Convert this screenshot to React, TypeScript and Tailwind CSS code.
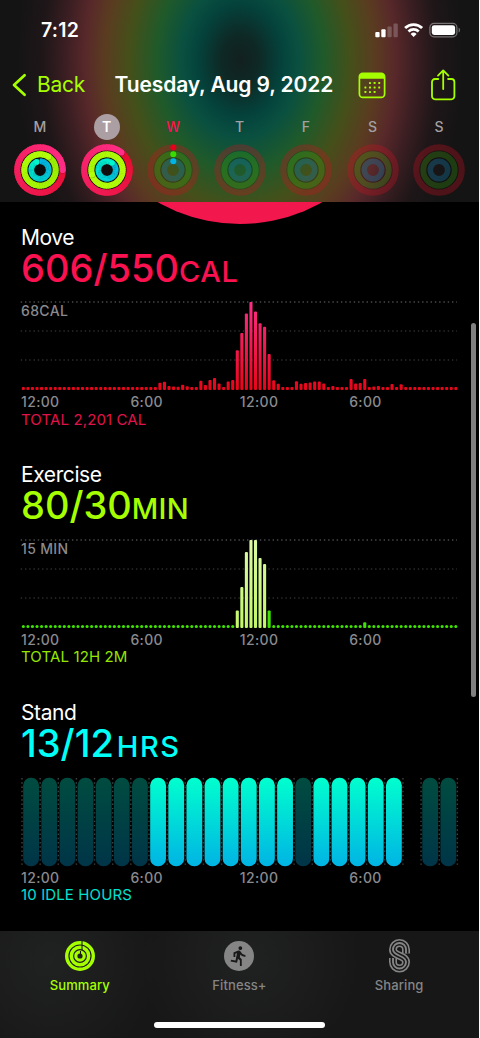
import React from 'react';
import { MdDirectionsRun } from 'react-icons/md';

type Rgb = [number, number, number];

interface RingSpec {
  radius: number;
  width: number;
  from: Rgb;
  to: Rgb;
  idle: string;
}

const RINGS: RingSpec[] = [
  { radius: 22.7, width: 6.2, from: [226, 8, 34], to: [255, 46, 136], idle: 'rgba(200,20,35,0.32)' },
  { radius: 15.7, width: 6, from: [150, 236, 0], to: [180, 255, 10], idle: 'rgba(60,170,10,0.27)' },
  { radius: 8.7, width: 5.6, from: [0, 178, 228], to: [0, 246, 204], idle: 'rgba(20,120,160,0.36)' },
];

interface Day {
  label: string;
  state: 'done' | 'today' | 'future';
  selected?: boolean;
  progress?: number[];
}

const DAYS: Day[] = [
  { label: 'M', state: 'done', progress: [1.25, 1.09, 0.94] },
  { label: 'T', state: 'done', selected: true, progress: [1.11, 2.7, 1.1] },
  { label: 'W', state: 'today' },
  { label: 'T', state: 'future' },
  { label: 'F', state: 'future' },
  { label: 'S', state: 'future' },
  { label: 'S', state: 'future' },
];

// 15 minute buckets, value is the bar height in px
const sparse = (values: Record<number, number>) =>
  Array.from({ length: 96 }, (_, i) => values[i] ?? 3);

const MOVE = sparse({
  30: 7.3, 31: 8.3, 32: 4, 33: 3.5, 34: 3.3, 35: 5.3, 36: 3.7,
  39: 9.3, 40: 5, 41: 10, 42: 12, 43: 6.5, 45: 8.5, 46: 10,
  47: 39.7, 48: 57, 49: 76.5, 50: 88, 51: 78.5, 52: 66.7, 53: 63.3, 54: 36,
  55: 9.7, 56: 6.3, 60: 8.7, 61: 6.3, 62: 7, 63: 7.5, 64: 8.5, 65: 8.5, 66: 6.5,
  68: 4, 72: 11, 73: 6.5, 74: 7, 75: 11, 77: 3.5, 78: 4, 81: 6, 83: 5.7,
});

const EXERCISE = sparse({
  47: 17.5, 48: 41, 49: 76, 50: 88, 51: 88, 52: 70, 53: 64, 54: 17.5, 75: 5.7,
});

// 1 = stood, 0 = idle, - = no data
const STAND = '000000011111111011111-00'.split('');

const mix = (a: Rgb, b: Rgb, t: number) =>
  `rgb(${a.map((v, i) => Math.round(v + (b[i] - v) * t)).join(',')})`;

const point = (r: number, turn: number) => {
  const a = turn * Math.PI * 2;
  return [26 + r * Math.sin(a), 26 - r * Math.cos(a)];
};

const ProgressRing: React.FC<{ spec: RingSpec; value: number }> = ({ spec, value }) => {
  const steps = Math.round(value * 60);
  const start = Math.max(0, steps - 60);
  const [hx, hy] = point(spec.radius, value);
  return (
    <g>
      <circle cx="26" cy="26" r={spec.radius} fill="none" stroke={mix(spec.from, spec.to, 0)} strokeOpacity="0.25" strokeWidth={spec.width} />
      {Array.from({ length: steps - start }, (_, k) => {
        const i = start + k;
        const [x1, y1] = point(spec.radius, (i / steps) * value);
        const [x2, y2] = point(spec.radius, ((i + 1.3) / steps) * value);
        return (
          <path
            key={i}
            d={`M${x1} ${y1}A${spec.radius} ${spec.radius} 0 0 1 ${x2} ${y2}`}
            fill="none"
            stroke={mix(spec.from, spec.to, i / steps)}
            strokeWidth={spec.width}
          />
        );
      })}
      <circle cx={hx + 0.4} cy={hy + 0.4} r={spec.width / 2} fill="#000" fillOpacity="0.25" />
      <circle cx={hx} cy={hy} r={spec.width / 2} fill={mix(spec.from, spec.to, 1)} />
    </g>
  );
};

const DayRings: React.FC<{ day: Day }> = ({ day }) => (
  <svg width="52" height="52" viewBox="0 0 52 52">
    {day.progress ? (
      <>
        <circle cx="26" cy="26" r="24" fill="#0b0b0d" fillOpacity="0.92" />
        {RINGS.map((spec, i) => (
          <ProgressRing key={i} spec={spec} value={day.progress![i]} />
        ))}
      </>
    ) : (
      <>
        <circle cx="26" cy="26" r="19.2" fill="none" stroke="#000" strokeOpacity="0.12" strokeWidth="1" />
        <circle cx="26" cy="26" r="12.2" fill="none" stroke="#000" strokeOpacity="0.2" strokeWidth="1.2" />
        {RINGS.map((spec, i) => (
          <circle key={i} cx="26" cy="26" r={spec.radius} fill="none" stroke={spec.idle} strokeWidth={spec.width} />
        ))}
      </>
    )}
    {day.state === 'today' && (
      <>
        <circle cx="26.3" cy="3.4" r="3" fill="#e6001c" />
        <circle cx="26.3" cy="10.3" r="3" fill="#38dc00" />
        <circle cx="26.3" cy="17.3" r="3" fill="#00b4e6" />
      </>
    )}
  </svg>
);

const StatusBar = () => (
  <div className="flex h-[58px] items-center justify-between pt-px pr-[18px] pl-[41px]">
    <span className="text-[19.5px] leading-6 font-semibold tracking-[0.2px] text-white">7:12</span>
    <svg width="86" height="16" viewBox="0 0 86 16">
      <g fill="#fff">
        <rect x="0.3" y="10" width="4.3" height="5.2" rx="1" />
        <rect x="6.3" y="7.3" width="4.3" height="7.9" rx="1" />
        <rect x="12.4" y="4.4" width="4.3" height="10.8" rx="1" opacity="0.22" />
        <rect x="18.5" y="1.6" width="4.3" height="13.6" rx="1" opacity="0.22" />
      </g>
      <g fill="none" stroke="#fff" strokeWidth="2.8">
        <path d="M30.1 6a12.2 12.2 0 0 1 17 0" />
        <path d="M33.5 9.5a7.3 7.3 0 0 1 10.2 0" />
      </g>
      <path d="M35.6 11.9a4.4 4.4 0 0 1 6 0L38.6 15z" fill="#fff" />
      <rect x="54.9" y="1.4" width="27" height="13.4" rx="4" fill="none" stroke="#fff" strokeOpacity="0.4" strokeWidth="1.2" />
      <rect x="56.8" y="3.2" width="23.3" height="9.8" rx="2.4" fill="#fff" />
      <path d="M83.7 5.8c1.6.6 1.6 4 0 4.6z" fill="#fff" fillOpacity="0.45" />
    </svg>
  </div>
);

const NavBar = () => (
  <div className="flex h-[53px] items-center pl-3">
    <svg width="15" height="24" viewBox="0 0 15 24" className="mt-px">
      <path d="M12.6 2.2 2 12l10.6 9.8" fill="none" stroke="#a6ff00" strokeWidth="2.7" strokeLinecap="round" strokeLinejoin="round" />
    </svg>
    <span className="ml-2.5 w-[77.5px] text-[21px] leading-6 tracking-[-0.3px] text-[#a6ff00]">Back</span>
    <h1 className="w-[243.5px] text-[21px] leading-6 font-semibold tracking-[-0.12px] whitespace-nowrap text-white">
      Tuesday, Aug 9, 2022
    </h1>
    <svg width="28" height="27" viewBox="0 0 28 27" className="mt-px">
      <rect x="1.4" y="1.4" width="25.2" height="24" rx="3.4" fill="none" stroke="#a6ff00" strokeWidth="1.7" />
      <path d="M1.4 6.8V4.6a3.2 3.2 0 0 1 3.2-3.2h18.8a3.2 3.2 0 0 1 3.2 3.2v2.2z" fill="#a6ff00" />
      <g fill="#a6ff00">
        {[11.2, 15.8, 20.4].map((x) => <rect key={x} x={x - 0.2} y="10" width="2" height="2" rx=".4" />)}
        {[6.6, 11.2, 15.8, 20.4].map((x) => <rect key={x} x={x - 0.2} y="14.5" width="2" height="2" rx=".4" />)}
        {[6.6, 11.2, 15.8].map((x) => <rect key={x} x={x - 0.2} y="19" width="2" height="2" rx=".4" />)}
      </g>
    </svg>
    <svg width="26" height="32" viewBox="0 0 26 32" className="ml-[44px]">
      <g fill="none" stroke="#a6ff00" strokeWidth="1.8" strokeLinecap="round" strokeLinejoin="round">
        <path d="M8.3 10H5a3 3 0 0 0-3 3v14.3a3 3 0 0 0 3 3h16.400a3 3 0 0 0 3-3V13a3 3 0 0 0-3-3h-3.3" />
        <path d="M13.2 20V1.6M8 6.600l5.2-5.2 5.2 5.2" />
      </g>
    </svg>
  </div>
);

const labelColor = (day: Day) => {
  if (day.selected) return 'bg-[#ab9fa3] text-white font-semibold';
  if (day.state === 'today') return 'text-[#fa1150] font-medium';
  return 'text-[#a3a0a3] font-medium';
};

const WeekStrip = () => (
  <div className="grid grid-cols-7 px-[6.75px] pt-[2.5px]">
    {DAYS.map((day, i) => (
      <div key={i} className="flex flex-col items-center gap-[4.5px]">
        <span className={`flex size-[26px] items-center justify-center rounded-full text-[14px] ${labelColor(day)}`}>
          {day.label}
        </span>
        <DayRings day={day} />
      </div>
    ))}
  </div>
);

const Header = () => (
  <header className="relative h-[202px] shrink-0 bg-[#141414] bg-[radial-gradient(225px_300px_at_240px_60px,#12201f_0%,#0e2825_8%,#04433c_19%,#0a5040_26%,#1f5a2a_37%,#44501a_49%,#5a3c20_60%,#58282a_69%,#3a1e22_78%,#1e1618_88%,#141414_100%)]">
    <StatusBar />
    <NavBar />
    <WeekStrip />
  </header>
);

const BarChart: React.FC<{ bars: number[]; kind: 'move' | 'exercise'; label: string }> = ({ bars, kind, label }) => (
  <div className="relative h-[88px]">
    <svg width="438" height="88" viewBox="0 0 438 88" className="-ml-px block overflow-visible">
      <defs>
        <linearGradient id="moveFill" gradientUnits="userSpaceOnUse" x1="0" y1="0" x2="0" y2="88">
          <stop offset="0" stopColor="#fa2e86" />
          <stop offset="1" stopColor="#e80518" />
        </linearGradient>
        <linearGradient id="briskFill" gradientUnits="userSpaceOnUse" x1="0" y1="0" x2="0" y2="88">
          <stop offset="0" stopColor="#dcfaa4" />
          <stop offset="1" stopColor="#c2f66a" />
        </linearGradient>
      </defs>
      {[0, 29, 58].map((y) => (
        <line key={y} x1="0.7" x2="437" y1={y} y2={y} stroke={y ? '#2c2c2e' : '#4a4a4c'} strokeWidth="1.4" strokeDasharray="1.4 2.87" />
      ))}
      {bars.map((h, i) => {
        const brisk = i >= 47 && i <= 53;
        const fill = kind === 'move' ? 'url(#moveFill)' : brisk ? 'url(#briskFill)' : '#3fe200';
        const rx = kind === 'exercise' && h === 3 ? 1.5 : 1;
        return <rect key={i} x={1.8 + i * 4.552} y={88 - h} width="3.1" height={h} rx={rx} fill={fill} />;
      })}
    </svg>
    <span className="absolute top-px left-0 text-[14px] leading-4 font-medium tracking-[0.35px] text-[#8a8a8e]">{label}</span>
  </div>
);

const StandChart = () => (
  <svg width="438" height="88" viewBox="0 0 438 88" className="-ml-px block overflow-visible">
    <defs>
      <linearGradient id="standFill" x1="0" y1="0" x2="0" y2="1">
        <stop offset="0" stopColor="#00ffce" />
        <stop offset="1" stopColor="#00b4e4" />
      </linearGradient>
      <linearGradient id="idleFill" x1="0" y1="0" x2="0" y2="1">
        <stop offset="0" stopColor="#004c40" />
        <stop offset="1" stopColor="#003548" />
      </linearGradient>
    </defs>
    {Array.from({ length: 25 }, (_, i) => (
      <line key={i} x1={2 + i * 18.14} x2={2 + i * 18.14} y1="0" y2="88" stroke="#424244" strokeWidth="1.4" strokeDasharray="1.4 2.87" />
    ))}
    {STAND.map((s, i) =>
      s === '-' ? null : (
        <rect key={i} x={3.2 + i * 18.14} y="-0.3" width="15.8" height="88.6" rx="7.6" fill={s === '1' ? 'url(#standFill)' : 'url(#idleFill)'} />
      )
    )}
  </svg>
);

interface SectionProps {
  title: string;
  value: string;
  unit: string;
  total: string;
  valueColor: string;
  unitSpacing: string;
  totalColor: string;
  children: React.ReactNode;
}

const Section: React.FC<SectionProps> = ({ title, value, unit, total, valueColor, unitSpacing, totalColor, children }) => (
  <section className="h-[237.75px] shrink-0 pt-[22.5px] pl-[21px]">
    <h2 className="text-[21px] leading-6 tracking-[-0.4px] text-white">{title}</h2>
    <p className={`h-[37px] text-[38px] leading-[37px] font-medium whitespace-nowrap ${valueColor}`}>
      {value}
      <span className={`text-[29px] leading-none ${unitSpacing}`}>{unit}</span>
    </p>
    <div className="mt-[15.5px]">{children}</div>
    <div className="mt-1 grid grid-cols-[repeat(4,109.4px)] text-[14px] leading-4 font-medium tracking-[0.35px] text-[#8a8a8e]">
      <span>12:00</span>
      <span>6:00</span>
      <span>12:00</span>
      <span>6:00</span>
    </div>
    <p className={`mt-[0.5px] text-[15px] leading-[18px] tracking-[0.12px] ${totalColor}`}>{total}</p>
  </section>
);

const RingsIcon = () => (
  <svg width="30" height="34" viewBox="0 0 30 34">
    <g fill="none" stroke="#a6ff00">
      <circle cx="15" cy="17" r="13.3" strokeWidth="3.4" />
      <circle cx="15" cy="17" r="8.7" strokeWidth="3.5" />
      <circle cx="15" cy="17" r="4.2" strokeWidth="3.2" />
    </g>
    <path d="M17 2v4.400M17 7v4M15.500 12v3" stroke="#191a19" strokeWidth="1.1" />
  </svg>
);

const S_PATH = 'M17 14.500V10.500a6.500 6.500 0 0 0-13 0C4 17.500 17 16 17 23a6.500 6.500 0 0 1-13 0v-4';

const SharingIcon = () => (
  <svg width="21" height="34" viewBox="0 0 21 34">
    <g fill="none">
      <path d={S_PATH} stroke="#858585" strokeWidth="8" />
      <path d={S_PATH} stroke="#181818" strokeWidth="4.8" />
      <path d={S_PATH} stroke="#858585" strokeWidth="1.9" />
    </g>
  </svg>
);

const FitnessIcon = () => (
  <span className="flex h-[34px] items-center">
    <span className="flex size-[30px] items-center justify-center rounded-full bg-[#858585]">
      <MdDirectionsRun className="size-[22px] text-[#191919]" />
    </span>
  </span>
);

const TABS = [
  { label: 'Summary', icon: <RingsIcon />, color: 'text-[#a6ff00]' },
  { label: 'Fitness+', icon: <FitnessIcon />, color: 'text-[#858585]' },
  { label: 'Sharing', icon: <SharingIcon />, color: 'text-[#858585]' },
];

const TabBar = () => (
  <footer className="relative mt-auto flex h-[107px] shrink-0 flex-col items-center justify-between bg-[#171717] bg-[radial-gradient(circle_at_50px_30px,#202221_0px,transparent_110px),radial-gradient(circle_at_250px_30px,#202221_0px,transparent_110px)] pt-[7.5px] pb-2.5">
    <nav className="grid w-full grid-cols-3">
      {TABS.map((tab) => (
        <div key={tab.label} className={`flex flex-col items-center ${tab.color}`}>
          {tab.icon}
          <span className="mt-1 text-[13px] leading-4 font-medium tracking-[0.1px]">{tab.label}</span>
        </div>
      ))}
    </nav>
    <div className="h-[6.5px] w-[171px] rounded-full bg-white" />
  </footer>
);

export default function App() {
  return (
    <div className="w-[480px] bg-white pr-px font-[Inter,sans-serif]">
      <div className="relative flex h-[1038px] flex-col overflow-hidden bg-black">
        {/* Bottom of the large ring scrolled under the header */}
        <div className="absolute top-[-110px] left-[73px] size-[334px] rounded-full bg-[#f2174c]" />
        <Header />
        <main className="relative flex flex-col pt-px">
          <Section
            title="Move"
            value="606/550"
            unit="CAL"
            total="TOTAL 2,201 CAL"
            valueColor="text-[#fa1150]"
            unitSpacing="tracking-[0.7px]"
            totalColor="text-[#e0124a]"
          >
            <BarChart bars={MOVE} kind="move" label="68CAL" />
          </Section>
          <Section
            title="Exercise"
            value="80/30"
            unit="MIN"
            total="TOTAL 12H 2M"
            valueColor="text-[#a6ff00]"
            unitSpacing="tracking-[0.2px]"
            totalColor="text-[#96e600]"
          >
            <BarChart bars={EXERCISE} kind="exercise" label="15 MIN" />
          </Section>
          <Section
            title="Stand"
            value="13/12"
            unit="HRS"
            total="10 IDLE HOURS"
            valueColor="text-[#00fff6]"
            unitSpacing="ml-[3px] tracking-[1.5px]"
            totalColor="text-[#00e0d0]"
          >
            <StandChart />
          </Section>
        </main>
        <TabBar />
        {/* Scroll indicator */}
        <div className="absolute top-[323px] left-[471px] h-[374px] w-[4.5px] rounded-full bg-[#808080]" />
      </div>
    </div>
  );
}
